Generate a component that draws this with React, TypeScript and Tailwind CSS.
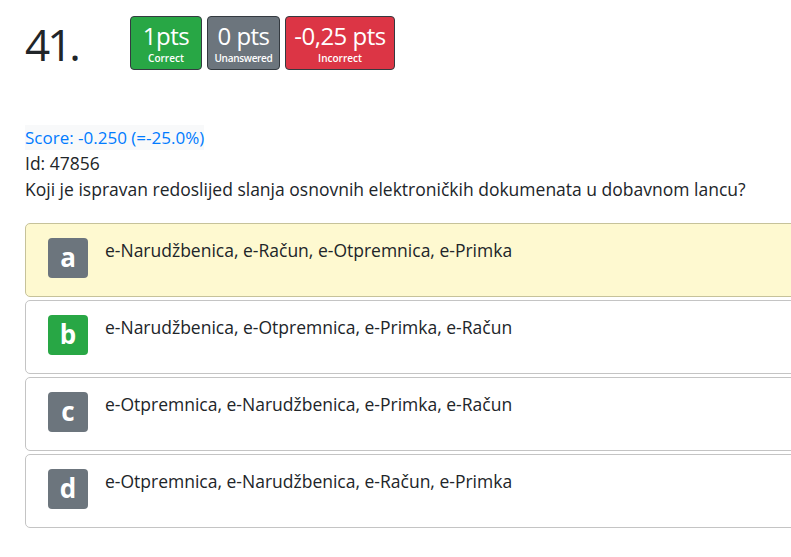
import React from 'react';

const options = [
  { letter: 'a', text: 'e-Narudžbenica, e-Račun, e-Otpremnica, e-Primka', selected: true, correct: false },
  { letter: 'b', text: 'e-Narudžbenica, e-Otpremnica, e-Primka, e-Račun', selected: false, correct: true },
  { letter: 'c', text: 'e-Otpremnica, e-Narudžbenica, e-Primka, e-Račun', selected: false, correct: false },
  { letter: 'd', text: 'e-Otpremnica, e-Narudžbenica, e-Račun, e-Primka', selected: false, correct: false },
];

const App: React.FC = () => {
  return (
    <div
      className="w-[791px] h-[557px] overflow-hidden bg-white text-[#212529]"
      style={{ fontFamily: '"Open Sans", sans-serif' }}
    >
      <div className="pl-[25px] pt-[16px]">
        {/* Header with number and points */}
        <div className="flex items-start">
          <div className="w-[105px] pt-[4px] text-[44px] leading-[48px] tracking-[-3px]">41.</div>
          <div className="flex gap-[5px]">
            <div className="h-[54px] w-[72px] rounded-[4px] border border-[#343a40] bg-[#28a745] text-white flex flex-col items-center pt-[3px]">
              <span className="text-[24px] leading-[31px] tracking-[-0.5px]">1pts</span>
              <span className="text-[10px] leading-[14px] font-semibold">Correct</span>
            </div>
            <div className="h-[54px] w-[73px] rounded-[4px] border border-[#343a40] bg-[#6c757d] text-white flex flex-col items-center pt-[3px]">
              <span className="text-[24px] leading-[31px] tracking-[-0.5px]">0 pts</span>
              <span className="text-[10px] leading-[14px] font-semibold tracking-[-0.3px]">Unanswered</span>
            </div>
            <div className="h-[54px] w-[110px] rounded-[4px] border border-[#343a40] bg-[#dc3545] text-white flex flex-col items-center pt-[3px]">
              <span className="text-[24px] leading-[31px] tracking-[-0.5px]">-0,25 pts</span>
              <span className="text-[10px] leading-[14px] font-semibold">Incorrect</span>
            </div>
          </div>
        </div>

        {/* Score and question */}
        <div className="mt-[54px] text-[17.5px] leading-[26px]">
          <div className="inline-block bg-[#f8f9fa] text-[#007bff] text-[17px] leading-[25px]">Score: -0.250 (=-25.0%)</div>
          <div>Id: 47856</div>
          <div>Koji je ispravan redoslijed slanja osnovnih elektroničkih dokumenata u dobavnom lancu?</div>
        </div>

        {/* Answers */}
        <div className="mt-[21px] flex flex-col gap-[3px] w-[800px]">
          {options.map((o) => (
            <div
              key={o.letter}
              className={`h-[74px] rounded-[5px] border flex items-start pl-[22px] pt-[14px] ${
                o.selected ? 'bg-[#fef9d0] border-[#c6c29a]' : 'bg-white border-[#c4c4c4]'
              }`}
            >
              <div
                className={`w-[40px] h-[40px] rounded-[4px] flex items-center justify-center text-white font-bold text-[26px] leading-none pb-[3px] ${
                  o.correct ? 'bg-[#28a745]' : 'bg-[#6c757d]'
                }`}
              >
                {o.letter}
              </div>
              <div className="ml-[17px] text-[17.5px] leading-[24px]">{o.text}</div>
            </div>
          ))}
        </div>
      </div>
    </div>
  );
};

export default App;
